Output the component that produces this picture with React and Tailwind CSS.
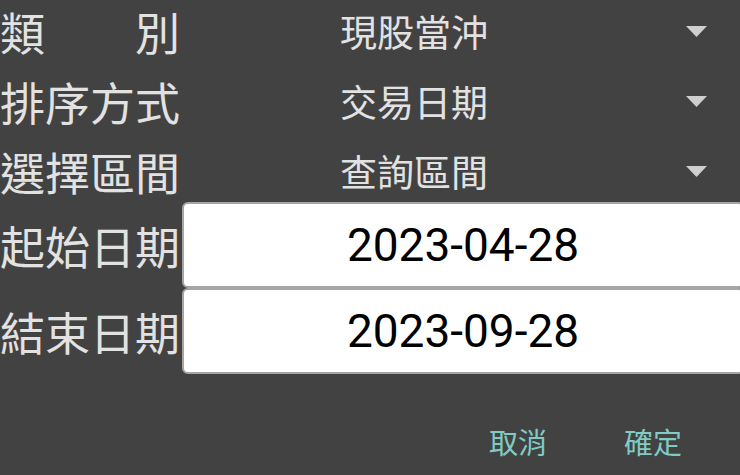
const cjk = { fontFamily: '"Noto Sans CJK TC", "Noto Sans", sans-serif' }

function Caret() {
  return (
    <svg width="21" height="11" viewBox="0 0 21 11" className="shrink-0">
      <polygon points="0,0 21,0 10.5,11" fill="#cfcfcf" />
    </svg>
  )
}

function SelectRow({ label, value }) {
  return (
    <div className="flex items-center h-[70px]">
      <div className="w-[182px] shrink-0 text-[45px] leading-none text-[#e2e2e2] whitespace-pre">{label}</div>
      <div className="flex-1 flex items-center pl-[158px] pr-[33px]">
        <span className="flex-1 text-[37px] leading-none text-[#e2e2e2]">{value}</span>
        <Caret />
      </div>
    </div>
  )
}

function DateRow({ label, value }) {
  return (
    <div className="flex items-center h-[86px]">
      <div className="w-[182px] shrink-0 text-[45px] leading-none text-[#e2e2e2]">{label}</div>
      <div className="-mr-[4px] flex-1 h-full flex items-center justify-center bg-white border-2 border-[#a6a6a6] rounded-[6px]">
        <span className="text-[46px] leading-none text-black" style={{ fontFamily: 'Roboto, "Liberation Sans", sans-serif' }}>
          {value}
        </span>
      </div>
    </div>
  )
}

export default function App() {
  return (
    <div className="w-[740px] h-[475px] overflow-hidden bg-[#424242]" style={cjk}>
      <div className="-mt-[4px] flex flex-col">
        <SelectRow label="類　　別" value="現股當沖" />
        <SelectRow label="排序方式" value="交易日期" />
        <SelectRow label="選擇區間" value="查詢區間" />
        <div className="mt-[-4px] flex flex-col">
          <DateRow label="起始日期" value="2023-04-28" />
          <DateRow label="結束日期" value="2023-09-28" />
        </div>
      </div>
      <div className="flex justify-end items-center gap-[77px] pr-[58px] mt-[53px]">
        <button className="text-[29px] leading-none text-[#80cbc4]">取消</button>
        <button className="text-[29px] leading-none text-[#80cbc4]">確定</button>
      </div>
    </div>
  )
}
